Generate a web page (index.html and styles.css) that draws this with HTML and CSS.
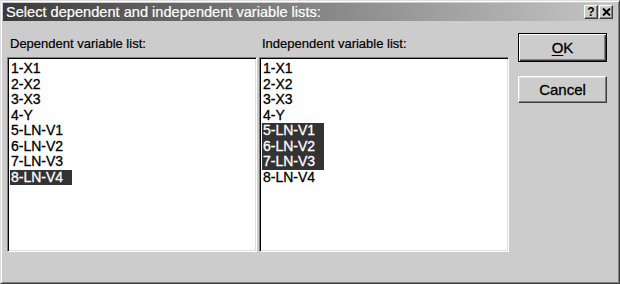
FILE: index.html
```html
<!DOCTYPE html>
<html lang="en">
<head>
    <meta charset="UTF-8">
    <title>Select dependent and independent variable lists</title>
    <link rel="stylesheet" href="styles.css">
</head>
<body>
    <div class="dialog">
        <div class="title-bar">
            <span class="title-text">Select dependent and independent variable lists:</span>
            <div class="title-buttons">
                <button class="caption-btn">?</button>
                <button class="caption-btn">
                    <svg width="9" height="8" viewBox="0 0 9 8">
                        <path d="M1 0.5 L8 7.5 M8 0.5 L1 7.5" stroke="#000" stroke-width="2"/>
                    </svg>
                </button>
            </div>
        </div>

        <div class="dialog-body">
            <div class="list-column">
                <div class="list-label">Dependent variable list:</div>
                <div class="list-box">
                    <div class="list-item">1-X1</div>
                    <div class="list-item">2-X2</div>
                    <div class="list-item">3-X3</div>
                    <div class="list-item">4-Y</div>
                    <div class="list-item">5-LN-V1</div>
                    <div class="list-item">6-LN-V2</div>
                    <div class="list-item">7-LN-V3</div>
                    <div class="list-item selected">8-LN-V4</div>
                </div>
            </div>

            <div class="list-column">
                <div class="list-label">Independent variable list:</div>
                <div class="list-box">
                    <div class="list-item">1-X1</div>
                    <div class="list-item">2-X2</div>
                    <div class="list-item">3-X3</div>
                    <div class="list-item">4-Y</div>
                    <div class="list-item selected">5-LN-V1</div>
                    <div class="list-item selected">6-LN-V2</div>
                    <div class="list-item selected">7-LN-V3</div>
                    <div class="list-item">8-LN-V4</div>
                </div>
            </div>

            <div class="button-column">
                <button class="push-btn default"><u>O</u>K</button>
                <button class="push-btn">Cancel</button>
            </div>
        </div>
    </div>
</body>
</html>
```

FILE: styles.css
```css
:root {
    --face: #cccccc;
    --light: #dedede;
    --shadow: #808080;
    --dark: #3c3c3c;
    --select: #333333;
}

* {
    margin: 0;
    padding: 0;
    box-sizing: border-box;
}

body {
    font-family: 'Liberation Sans', Arial, sans-serif;
    background: var(--face);
    color: #000;
}

.dialog {
    width: 620px;
    height: 284px;
    background: var(--face);
    border: 1px solid;
    border-color: var(--light) var(--dark) var(--dark) var(--light);
    box-shadow: inset 1px 1px 0 #ffffff, inset -1px -1px 0 var(--shadow);
    padding: 2px;
}

.title-bar {
    height: 18px;
    display: flex;
    align-items: center;
    justify-content: space-between;
    padding: 0 4px 0 3px;
    background: linear-gradient(90deg, #3a3a3a 0%, #707070 35%, #c6c6c6 100%);
}

.title-text {
    color: #ffffff;
    font-size: 14.6px;
    line-height: 18px;
    white-space: nowrap;
    -webkit-text-stroke: 0.2px #ffffff;
}

.title-buttons {
    display: flex;
    gap: 1px;
}

.caption-btn {
    width: 14px;
    height: 14px;
    display: flex;
    align-items: center;
    justify-content: center;
    background: var(--face);
    border: 1px solid;
    border-color: #ffffff var(--dark) var(--dark) #ffffff;
    box-shadow: inset -1px -1px 0 var(--shadow);
    font-family: 'Liberation Sans', Arial, sans-serif;
    font-weight: bold;
    font-size: 12px;
    line-height: 12px;
    color: #000;
}

.dialog-body {
    display: flex;
    padding: 12px 0 0 4px;
}

.list-column {
    width: 250px;
    margin-right: 2px;
}

.list-label {
    font-size: 13px;
    line-height: 15px;
    padding: 3px 0 0 3px;
    height: 24px;
    -webkit-text-stroke: 0.2px #000;
}

.list-box {
    height: 195px;
    background: #ffffff;
    border: 1px solid;
    border-color: var(--shadow) #ffffff #ffffff var(--shadow);
    box-shadow: inset 1px 1px 0 #000000, inset -1px -1px 0 var(--light);
    padding: 3px 2px;
}

.list-item {
    width: 62px;
    font-size: 14px;
    line-height: 15.5px;
    padding-left: 1px;
    white-space: nowrap;
    -webkit-text-stroke: 0.3px #000;
}

.list-item.selected {
    background: var(--select);
    color: #ffffff;
    -webkit-text-stroke: 0.3px #ffffff;
}

.button-column {
    display: flex;
    flex-direction: column;
    gap: 14px;
    margin-left: 7px;
}

.push-btn {
    width: 89px;
    height: 27px;
    background: var(--face);
    border: 1px solid;
    border-color: #ffffff var(--dark) var(--dark) #ffffff;
    box-shadow: inset -1px -1px 0 var(--shadow), inset 1px 1px 0 var(--light);
    font-family: 'Liberation Sans', Arial, sans-serif;
    font-size: 15px;
    color: #000;
    -webkit-text-stroke: 0.3px #000;
}

.push-btn.default {
    height: 29px;
    border: 1px solid #000000;
    box-shadow: inset 1px 1px 0 #ffffff, inset -1px -1px 0 var(--dark), inset -2px -2px 0 var(--shadow);
}

.push-btn u {
    text-decoration-thickness: 1px;
    text-underline-offset: 2px;
}
```
